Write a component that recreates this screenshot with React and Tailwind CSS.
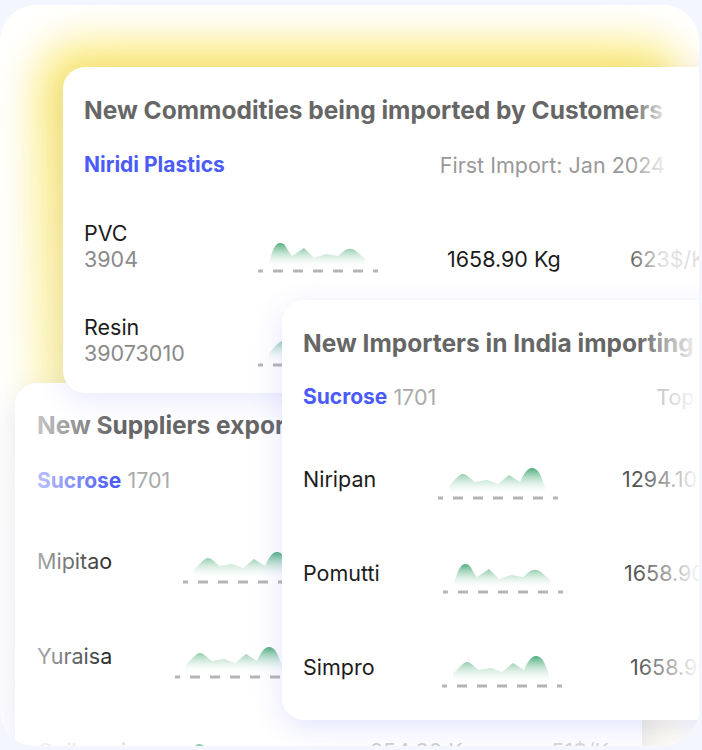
import { useId } from 'react';

// sparkline shapes: A = tall peak on the left, B = tall peak on the right
const SHAPES = {
  A: 'M10 28 L11 22 C14 12 17 3 22 3 C27 3 28 7 31 12 L34 16 L46 8 L56 18 L68 14 L80 16 L86 11 C90 8 94 8 98 11 L107 19 L107 28 Z',
  B: 'M11 28 L11 19 C16 14 21 7 25 7 C29 7 33 13 37 15 L49 13 L60 17 L71 8 L82 15 C85 8 89 1 94 1 C99 1 102 6 104 12 L107 20 L107 28 Z',
};

function Sparkline({ shape = 'A', className = '' }) {
  const id = useId();
  return (
    <svg width="122" height="34" viewBox="0 0 122 34" className={`block ${className}`}>
      <defs>
        <linearGradient id={id} x1="0" y1="0" x2="0" y2="1">
          <stop offset="0%" stopColor="#3ba46d" stopOpacity="0.9" />
          <stop offset="100%" stopColor="#ffffff" stopOpacity="0" />
        </linearGradient>
      </defs>
      <path d={SHAPES[shape]} fill={`url(#${id})`} />
      <line
        x1="0" y1="31" x2="120" y2="31"
        stroke="#b5b5b5" strokeWidth="3"
        strokeDasharray="5 10 10 10 10 10 10 10 10 10 10 10 5"
      />
    </svg>
  );
}

const commodities = [
  { name: 'PVC', code: '3904', shape: 'A', qty: '1658.90 Kg', price: '623$/Kg' },
  { name: 'Resin', code: '39073010', shape: 'B', qty: '1294.10 Kg', price: '590$/Kg' },
];

const importers = [
  { name: 'Niripan', shape: 'B', spark: '', qty: '1294.10 Kg', qtyCls: '' },
  { name: 'Pomutti', shape: 'A', spark: 'ml-[5px]', qty: '1658.90 Kg', qtyCls: 'ml-[2px]' },
  { name: 'Simpro', shape: 'B', spark: 'ml-[4px]', qty: '1658.90 Kg', qtyCls: 'ml-[8px]' },
];

const suppliers = [
  { name: 'Mipitao', shape: 'B', spark: 'ml-[146px]' },
  { name: 'Yuraisa', shape: 'B', spark: 'ml-[138px]' },
  { name: 'Quilomui', shape: 'A', spark: 'ml-[140px]' },
];

export default function App() {
  return (
    <div className="w-[702px] h-[750px] bg-[#f3f6fe] pt-[5px] font-['Inter',sans-serif] overflow-hidden">
      <div className="relative w-[699px] h-[741px] rounded-[36px] overflow-hidden bg-white">

        {/* ── Yellow glow ─────────────────────────────────────────── */}
        <div className="absolute left-[38px] top-[40px] w-[645px] h-[700px] rounded-[40px] bg-gradient-to-b from-[#fbe767] via-[#fcf2a6] to-[#fbf8de] blur-[22px]" />

        {/* ── Card B: New Suppliers ───────────────────────────────── */}
        <div className="absolute left-[15px] top-[378px] w-[627px] h-[420px] rounded-[22px] bg-white shadow-[0_8px_28px_rgba(88,96,240,0.13)] overflow-hidden">
          <div className="pl-[22px] pt-[28px]">
            <h2 className="text-[24.5px] leading-[28px] font-bold text-[#666] whitespace-nowrap">
              New Suppliers exporting Sucrose to India
            </h2>
            <p className="mt-[28px] text-[21.5px] leading-[26px] whitespace-nowrap">
              <span className="font-bold text-[#4b5cf6] text-[21px]">Sucrose</span>{' '}
              <span className="text-[#aaa]">1701</span>
            </p>
            <div className="mt-[20px]">
              {suppliers.map((s, i) => (
                <div key={s.name} className="h-[95px] flex items-center">
                  <span className={`w-0 text-[21.5px] whitespace-nowrap ${i === 2 ? 'text-[#c9c9c9]' : 'text-[#222]'}`}>{s.name}</span>
                  <Sparkline shape={s.shape} className={`${s.spark} mt-[12px]`} />
                  <span className="ml-[71px] text-[21.5px] text-[#bbb] whitespace-nowrap">254.90 Kg</span>
                  <span className="ml-[76px] text-[21.5px] text-[#c4c4c4] whitespace-nowrap">51$/Kg</span>
                </div>
              ))}
            </div>
          </div>
          <div className="absolute inset-y-0 left-0 w-[100px] bg-gradient-to-r from-white/80 to-white/0" />
          <div className="absolute inset-x-0 top-[330px] h-[90px] bg-gradient-to-b from-white/0 to-white/90" />
        </div>

        {/* ── Card A: New Commodities ─────────────────────────────── */}
        <div className="absolute left-[63px] top-[62px] w-[680px] h-[326px] rounded-[22px] bg-white shadow-[0_8px_28px_rgba(88,96,240,0.13)] overflow-hidden">
          <div className="pl-[21px] pt-[29px] w-[602px]">
            <h2 className="text-[24.5px] leading-[28px] font-bold text-[#666] whitespace-nowrap">
              New Commodities being imported by Customers
            </h2>
            <div className="mt-[28px] flex items-center justify-between text-[21.5px] leading-[26px] whitespace-nowrap">
              <span className="font-bold text-[21px] text-[#4b5cf6]">Niridi Plastics</span>
              <span className="text-[#999]">First Import: Jan 2024</span>
            </div>
            <div className="mt-[42px]">
              {commodities.map(c => (
                <div key={c.name} className="h-[94px] grid grid-cols-[176px_187px_183px_auto] items-start">
                  <div className="text-[21.5px] leading-[26px] whitespace-nowrap">
                    <p className="text-[#1c1c1c]">{c.name}</p>
                    <p className="text-[#8a8a8a]">{c.code}</p>
                  </div>
                  <Sparkline shape={c.shape} className="ml-[-2px] mt-[20px]" />
                  <p className="mt-[26px] text-[21.5px] leading-[26px] text-[#1c1c1c] whitespace-nowrap">{c.qty}</p>
                  <p className="mt-[26px] text-[21.5px] leading-[26px] text-[#666] whitespace-nowrap">{c.price}</p>
                </div>
              ))}
            </div>
          </div>
          <div className="absolute inset-y-0 left-[568px] w-[32px] bg-gradient-to-r from-white/0 to-white/80" />
          <div className="absolute inset-y-0 left-[600px] right-0 bg-white/80" />
        </div>

        {/* ── Card C: New Importers ───────────────────────────────── */}
        <div className="absolute left-[282px] top-[295px] w-[460px] h-[420px] rounded-[22px] bg-white shadow-[0_8px_30px_rgba(88,96,240,0.16)] overflow-hidden">
          <div className="pl-[21px] pt-[29px]">
            <h2 className="text-[24.5px] leading-[28px] font-bold text-[#666] whitespace-nowrap">
              New Importers in India importing Sucrose
            </h2>
            <div className="mt-[27px] flex items-center text-[21.5px] leading-[26px] whitespace-nowrap">
              <span className="font-bold text-[21px] text-[#4b5cf6]">Sucrose</span>
              <span className="ml-[6px] text-[#aaa]">1701</span>
              <span className="ml-[220px] text-[#aaa]">Top Importers</span>
            </div>
            <div className="mt-[22px]">
              {importers.map(r => (
                <div key={r.name} className="h-[94px] grid grid-cols-[135px_184px_auto] items-center">
                  <span className="text-[21.5px] text-[#1c1c1c] whitespace-nowrap">{r.name}</span>
                  <Sparkline shape={r.shape} className={`${r.spark} mt-[10px]`} />
                  <span className={`${r.qtyCls} text-[21.5px] text-[#555] whitespace-nowrap`}>{r.qty}</span>
                </div>
              ))}
            </div>
          </div>
          <div className="absolute inset-y-0 left-[355px] w-[55px] bg-gradient-to-r from-white/0 to-white/85" />
          <div className="absolute inset-y-0 left-[410px] right-0 bg-white/90" />
        </div>

      </div>
    </div>
  );
}
